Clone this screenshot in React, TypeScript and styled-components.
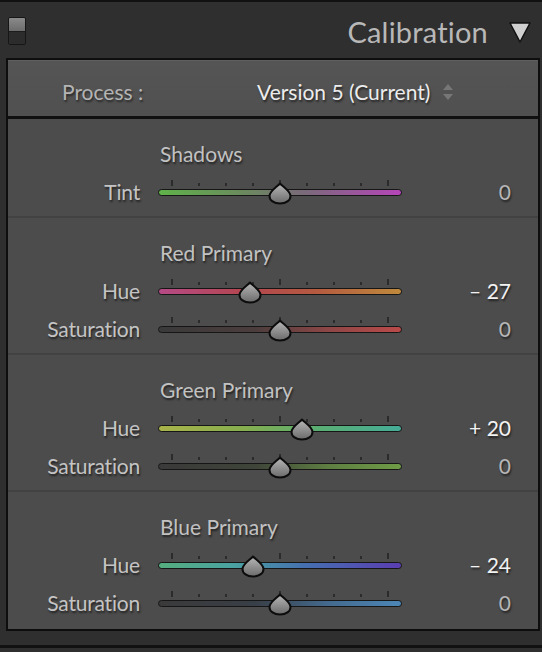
import styled, { createGlobalStyle } from 'styled-components'

const GlobalStyle = createGlobalStyle`
  html, body {
    margin: 0;
    padding: 0;
    background: #2e2e2e;
  }
  body {
    font-family: Lato, "Open Sans", sans-serif;
    -webkit-font-smoothing: antialiased;
  }
`;

type SliderRow = {
  label: string;
  value: number;
  gradient: string;
};

type Group = {
  title: string;
  rows: SliderRow[];
};

const groups: Group[] = [
  {
    title: "Shadows",
    rows: [
      { label: "Tint", value: 0, gradient: "linear-gradient(90deg, #5fb24a 0%, #6b8a5e 35%, #7a6a7a 60%, #b645b9 100%)" },
    ],
  },
  {
    title: "Red Primary",
    rows: [
      { label: "Hue", value: -27, gradient: "linear-gradient(90deg, #b54a86 0%, #b44650 35%, #b45a40 65%, #bf8a3c 100%)" },
      { label: "Saturation", value: 0, gradient: "linear-gradient(90deg, #3a3a3a 0%, #4c3d3d 40%, #8e4646 70%, #bb4a4a 100%)" },
    ],
  },
  {
    title: "Green Primary",
    rows: [
      { label: "Hue", value: 20, gradient: "linear-gradient(90deg, #a9b34a 0%, #86ae4e 35%, #5aae72 65%, #45ac97 100%)" },
      { label: "Saturation", value: 0, gradient: "linear-gradient(90deg, #3a3a3a 0%, #3f4539 40%, #5e7e42 70%, #6f9c46 100%)" },
    ],
  },
  {
    title: "Blue Primary",
    rows: [
      { label: "Hue", value: -24, gradient: "linear-gradient(90deg, #55ad7e 0%, #4aa3a0 30%, #4570b0 60%, #5a3db2 100%)" },
      { label: "Saturation", value: 0, gradient: "linear-gradient(90deg, #3a3a3a 0%, #393f47 40%, #446a8e 70%, #4c86b6 100%)" },
    ],
  },
];

const TRACK_W = 244;
const THUMB_W = 22;

const formatValue = (v: number) => {
  if (v === 0) return "0";
  return v < 0 ? `\u2013 ${Math.abs(v)}` : `+ ${v}`;
};

const Thumb = () => (
  <svg width="24" height="23" viewBox="0 0 24 23">
    <defs>
      <linearGradient id="thumbFill" x1="0" y1="0" x2="0" y2="1">
        <stop offset="0" stopColor="#b8b8b8" />
        <stop offset="1" stopColor="#6a6a6a" />
      </linearGradient>
    </defs>
    <path
      d="M12 1.5 C14.5 4.5 22.5 9 22.5 14 C22.5 18.5 18 21.5 12 21.5 C6 21.5 1.5 18.5 1.5 14 C1.5 9 9.5 4.5 12 1.5 Z"
      fill="url(#thumbFill)"
      stroke="#0c0c0c"
      strokeWidth="2"
      strokeLinejoin="round"
    />
  </svg>
);

export default function App() {
  return (
    <Page>
      <GlobalStyle />
      <Header>
        <Toggle>
          <span />
          <span />
        </Toggle>
        <Title>Calibration</Title>
        <svg width="24" height="24" viewBox="0 0 24 24">
          <polygon points="2,3 22,3 12,22" fill="#d0d0d0" stroke="#111" strokeWidth="1.5" strokeLinejoin="round" />
        </svg>
      </Header>

      <Panel>
        <ProcessRow>
          <ProcessLabel>Process :</ProcessLabel>
          <ProcessValue>
            Version 5 (Current)
            <svg width="12" height="18" viewBox="0 0 12 18">
              <polygon points="6,1 11,7 1,7" fill="#777" />
              <polygon points="1,11 11,11 6,17" fill="#777" />
            </svg>
          </ProcessValue>
        </ProcessRow>

        {groups.map((group, gi) => (
          <Section key={group.title} $first={gi === 0}>
            <SectionTitle>{group.title}</SectionTitle>
            {group.rows.map((row) => {
              const center = THUMB_W / 2 + ((row.value + 100) / 200) * (TRACK_W - THUMB_W);
              return (
                <Row key={row.label}>
                  <Label>{row.label}</Label>
                  <SliderWrap>
                    <Ticks>
                      {Array.from({ length: 9 }).map((_, i) => (
                        <Tick key={i} $tall={i === 0 || i === 4 || i === 8} />
                      ))}
                    </Ticks>
                    <Track $gradient={row.gradient} />
                    <ThumbHolder style={{ left: center - 12 }}>
                      <Thumb />
                    </ThumbHolder>
                  </SliderWrap>
                  <Value $active={row.value !== 0}>{formatValue(row.value)}</Value>
                </Row>
              );
            })}
          </Section>
        ))}
      </Panel>
      <Footer />
    </Page>
  );
}

const Page = styled.div`
  width: 542px;
  height: 652px;
  background: #2f2f2f;
  overflow: hidden;
  display: flex;
  flex-direction: column;
`;

const Header = styled.div`
  height: 56px;
  border-top: 2px solid #111;
  display: flex;
  align-items: center;
  padding: 0 10px 0 8px;
  gap: 20px;
  background: #2f2f2f;

  svg {
    margin-top: 4px;
  }
`;

const Toggle = styled.div`
  width: 16px;
  height: 26px;
  margin-top: 2px;
  border: 1px solid #161616;
  border-radius: 2px;
  display: flex;
  flex-direction: column;
  overflow: hidden;
  margin-right: auto;

  span:first-child {
    flex: 1;
    background: linear-gradient(#8a8a8a, #6c6c6c);
  }
  span:last-child {
    flex: 1;
    background: #2c2c2c;
    border-top: 1px solid #1c1c1c;
  }
`;

const Title = styled.div`
  font-size: 29px;
  color: #b8b8b8;
  letter-spacing: 0.2px;
  margin-top: 3px;
`;

const Panel = styled.div`
  margin: 0 2px 0 6px;
  border: 2px solid #0e0e0e;
  background: #4c4c4c;
`;

const ProcessRow = styled.div`
  height: 59px;
  box-sizing: border-box;
  padding-top: 7px;
  display: flex;
  align-items: center;
  background: linear-gradient(#555555, #505050);
  border-bottom: 3px solid #101010;
  box-shadow: inset 0 1px 0 #5e5e5e;
`;

const ProcessLabel = styled.div`
  width: 195px;
  padding-left: 54px;
  font-size: 21px;
  color: #b4b4b4;
  text-shadow: 1px 2px 2px rgba(0, 0, 0, 0.5);
`;

const ProcessValue = styled.div`
  display: flex;
  align-items: center;
  gap: 12px;
  font-size: 21px;
  color: #ececec;
  text-shadow: 1px 2px 2px rgba(0, 0, 0, 0.55);
`;

const Section = styled.div<{ $first: boolean }>`
  padding: 16px 0 8px;
  border-top: ${(p) => (p.$first ? "none" : "2px solid #424242")};
  margin-top: ${(p) => (p.$first ? "0" : "-2px")};
  background: #4c4c4c;
`;

const SectionTitle = styled.div`
  height: 37px;
  line-height: 37px;
  padding-left: 152px;
  font-size: 21px;
  color: #c2c2c2;
  text-shadow: 1px 2px 2px rgba(0, 0, 0, 0.55);
`;

const Row = styled.div`
  display: grid;
  grid-template-columns: 132px ${TRACK_W}px 1fr;
  column-gap: 18px;
  height: 38px;
  align-items: center;
`;

const Label = styled.div`
  text-align: right;
  font-size: 21px;
  letter-spacing: -0.2px;
  color: #c4c4c4;
  text-shadow: 1px 2px 2px rgba(0, 0, 0, 0.55);
`;

const SliderWrap = styled.div`
  position: relative;
  height: 38px;
  padding-top: 8px;
  box-sizing: border-box;
  display: flex;
  flex-direction: column;
  gap: 3px;
`;

const Ticks = styled.div`
  height: 6px;
  display: flex;
  justify-content: space-between;
  align-items: flex-end;
  padding: 0 13px;
`;

const Tick = styled.div<{ $tall: boolean }>`
  width: 2px;
  height: ${(p) => (p.$tall ? "6px" : "3px")};
  background: #2b2b2b;
`;

const Track = styled.div<{ $gradient: string }>`
  height: 5px;
  border: 1.5px solid #161616;
  border-radius: 5px;
  background: ${(p) => p.$gradient};
`;

const ThumbHolder = styled.div`
  position: absolute;
  top: 10px;
  width: 24px;
  height: 23px;
  line-height: 0;
`;

const Value = styled.div<{ $active: boolean }>`
  text-align: right;
  padding-right: 27px;
  font-size: 21px;
  color: ${(p) => (p.$active ? "#f2f2f2" : "#b6b6b6")};
  text-shadow: 1px 2px 2px rgba(0, 0, 0, 0.55);
`;

const Footer = styled.div`
  height: 14px;
  border-bottom: 3px solid #111;
  flex-shrink: 0;
`;
